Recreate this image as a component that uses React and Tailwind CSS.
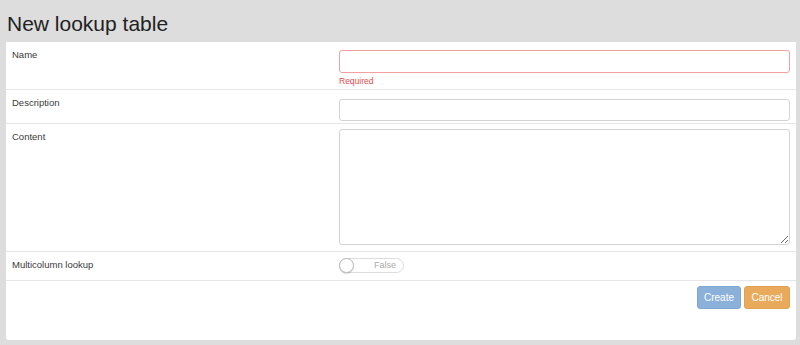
import React, { useState } from "react";

const font = { fontFamily: '"Liberation Sans", Arial, sans-serif' };

const Row = ({ label, children, className = "" }) => (
  <div className={`flex border-b border-[#e6e6e6] ${className}`}>
    <div className="w-[333px] shrink-0 pl-[6px] pt-[7px] text-[9.5px] leading-[12px] text-[#3a3a3a]">
      {label}
    </div>
    <div className="flex-1 pr-[6px]">{children}</div>
  </div>
);

const App = () => {
  const [name, setName] = useState("");
  const [multi, setMulti] = useState(false);

  return (
    <div className="h-[345px] w-[800px] bg-[#dddddd] flex flex-col" style={font}>
      {/* Title */}
      <div className="h-[42px] flex items-center px-[7px] pt-[5px]">
        <h1 className="text-[21px] leading-none text-[#222]">New lookup table</h1>
      </div>

      {/* Form card */}
      <div className="ml-[6px] mr-[4px] h-[298px] bg-white rounded-b-[3px] flex flex-col">
        <Row label="Name" className="h-[48px]">
          <div className="pt-[6px]">
            <input
              value={name}
              onChange={(e) => setName(e.target.value)}
              className="w-full h-[23px] rounded-[3px] border border-[#f3a0a0] outline-none px-2 text-[10px]"
            />
            <div className="mt-[3px] text-[8.5px] leading-[10px] text-[#e24a4a]">Required</div>
          </div>
        </Row>

        <Row label="Description" className="h-[34px]">
          <div className="pt-[6px]">
            <input className="w-full h-[22px] rounded-[3px] border border-[#d4d4d4] outline-none px-2 text-[10px]" />
          </div>
        </Row>

        <Row label="Content" className="h-[128px]">
          <div className="pt-[5px]">
            <textarea className="block w-full h-[116px] rounded-[3px] border border-[#d4d4d4] outline-none px-2 text-[10px]" />
          </div>
        </Row>

        <Row label="Multicolumn lookup" className="h-[29px]">
          <div className="pt-[6px]">
            <button
              onClick={() => setMulti(!multi)}
              className="relative w-[65px] h-[15px] rounded-full border border-[#dcdcdc] bg-white flex items-center justify-end pr-[7px]"
            >
              <span className="absolute left-[-1px] top-[-1px] w-[15px] h-[15px] rounded-full bg-white border border-[#b8b8b8] shadow-[0_1px_1px_rgba(0,0,0,0.15)]" />
              <span className="text-[9px] text-[#aaa]">{multi ? "True" : "False"}</span>
            </button>
          </div>
        </Row>

        {/* Actions */}
        <div className="flex justify-end gap-[3px] pt-[5px] pr-[6px]">
          <button className="w-[44px] h-[23px] rounded-[3px] bg-[#8bb0d9] border border-[#7fa6d3] text-white text-[10px]">
            Create
          </button>
          <button className="w-[46px] h-[23px] rounded-[3px] bg-[#e9ab5b] border border-[#e0a150] text-white text-[10px]">
            Cancel
          </button>
        </div>
      </div>
    </div>
  );
};

export default App;
